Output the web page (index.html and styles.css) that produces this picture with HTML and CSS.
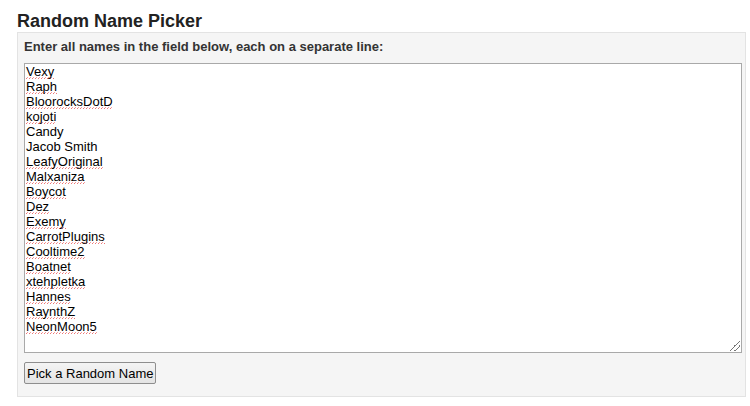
FILE: index.html
```html
<!DOCTYPE html>
<html>
<head>
<meta charset="utf-8">
<link rel="stylesheet" href="styles.css">
</head>
<body>
<div class="page">
  <h1 class="title">Random Name Picker</h1>
  <div class="panel">
    <div class="label">Enter all names in the field below, each on a separate line:</div>
    <div class="field">
      <div class="line"><span class="sp">Vexy</span></div>
      <div class="line"><span class="sp">Raph</span></div>
      <div class="line"><span class="sp">BloorocksDotD</span></div>
      <div class="line"><span class="sp">kojoti</span></div>
      <div class="line">Candy</div>
      <div class="line">Jacob Smith</div>
      <div class="line"><span class="sp">LeafyOriginal</span></div>
      <div class="line"><span class="sp">Malxaniza</span></div>
      <div class="line"><span class="sp">Boycot</span></div>
      <div class="line"><span class="sp">Dez</span></div>
      <div class="line"><span class="sp">Exemy</span></div>
      <div class="line"><span class="sp">CarrotPlugins</span></div>
      <div class="line"><span class="sp">Cooltime2</span></div>
      <div class="line"><span class="sp">Boatnet</span></div>
      <div class="line"><span class="sp">xtehpletka</span></div>
      <div class="line"><span class="sp">Hannes</span></div>
      <div class="line"><span class="sp">RaynthZ</span></div>
      <div class="line"><span class="sp">NeonMoon5</span></div>
      <span class="grip"></span>
    </div>
    <button class="btn">Pick a Random Name</button>
  </div>
</div>
</body>
</html>
```
FILE: styles.css
```css
html, body {
  margin: 0;
  padding: 0;
  background: #ffffff;
}
.page {
  padding: 10px 0 0 17px;
  font-family: "Liberation Sans", Arial, sans-serif;
  color: #222;
}
.title {
  margin: 0;
  font-size: 18px;
  line-height: 22px;
  font-weight: bold;
  color: #222;
}
.panel {
  box-sizing: border-box;
  width: 729px;
  background: #f5f5f5;
  border: 1px solid #e3e3e3;
  padding: 6px 6px 12px 6px;
}
.label {
  font-size: 13px;
  font-weight: bold;
  line-height: 15px;
  color: #333;
}
.field {
  position: relative;
  box-sizing: border-box;
  width: 718px;
  height: 290px;
  margin-top: 9px;
  background: #fff;
  border: 1px solid #a9a9a9;
  padding: 0 1px;
  font-size: 13px;
  line-height: 15px;
  color: #000;
}
.line {
  white-space: pre;
  height: 15px;
}
.sp {
  display: inline-block;
  height: 15px;
  background-image: repeating-linear-gradient(90deg, #ee7777 0 1px, transparent 1px 3px),
                    repeating-linear-gradient(90deg, transparent 0 1px, #f4a0a0 1px 2px, transparent 2px 3px);
  background-size: 100% 1px, 100% 1px;
  background-position: 0 100%, 0 calc(100% - 1px);
  background-repeat: no-repeat;
}
.grip {
  position: absolute;
  right: 1px;
  bottom: 1px;
  width: 10px;
  height: 10px;
  background: linear-gradient(135deg, transparent 0 45%, #777 45% 52%, transparent 52% 70%, #777 70% 77%, transparent 77%);
}
.btn {
  display: block;
  margin-top: 9px;
  box-sizing: border-box;
  height: 22px;
  padding: 0 2px;
  font-family: "Liberation Sans", Arial, sans-serif;
  font-size: 13px;
  color: #000;
  background: linear-gradient(#f4f4f4, #e4e4e4);
  border: 1px solid #8e8e8e;
  border-radius: 2px;
}
```
